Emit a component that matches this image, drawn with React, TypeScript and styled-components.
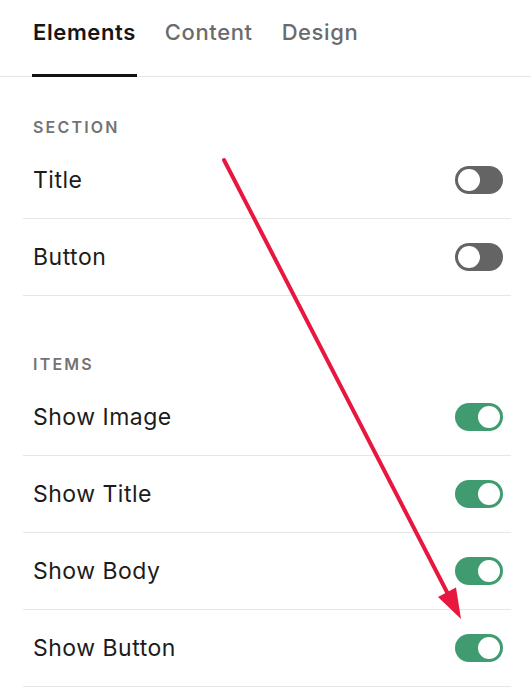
import React from 'react';
import styled, { createGlobalStyle } from 'styled-components';

const GlobalStyle = createGlobalStyle`
  html, body {
    margin: 0;
    padding: 0;
    background: #ffffff;
  }
  body {
    font-family: Inter, "Noto Sans", "Liberation Sans", sans-serif;
    color: #1a1a1a;
    -webkit-font-smoothing: antialiased;
  }
`;

const Panel = styled.div`
  position: relative;
  width: 531px;
  height: 700px;
  overflow: hidden;
  background: #ffffff;
`;

const TabBar = styled.div`
  display: flex;
  align-items: flex-end;
  gap: 27px;
  height: 77px;
  padding-left: 32px;
  border-bottom: 1px solid #e6e6e6;
  box-sizing: border-box;
`;

const Tab = styled.div<{ $active?: boolean }>`
  display: flex;
  align-items: center;
  height: 100%;
  padding: 0 1px 12px;
  box-sizing: border-box;
  font-size: 22px;
  letter-spacing: 0.6px;
  font-weight: ${(p) => (p.$active ? 600 : 500)};
  color: ${(p) => (p.$active ? '#161616' : '#6b6b6b')};
  border-bottom: 3px solid ${(p) => (p.$active ? '#111111' : 'transparent')};
  margin-bottom: -1px;
`;

const Group = styled.div<{ $top: number }>`
  margin: ${(p) => p.$top}px 20px 0 23px;
`;

const GroupLabel = styled.div`
  padding: 0 10px 5px;
  height: 20px;
  line-height: 20px;
  font-size: 16px;
  font-weight: 600;
  letter-spacing: 2.2px;
  color: #737373;
`;

const Row = styled.div`
  display: flex;
  align-items: center;
  justify-content: space-between;
  height: 77px;
  padding: 0 8px 0 10px;
  box-sizing: border-box;
  border-bottom: 1px solid #e6e6e6;
`;

const RowLabel = styled.span`
  font-size: 23px;
  letter-spacing: 0.5px;
  font-weight: 400;
  color: #1c1c1c;
`;

const Switch = styled.div<{ $on: boolean }>`
  position: relative;
  width: 48px;
  height: 28px;
  border-radius: 14px;
  background: ${(p) => (p.$on ? '#409c70' : '#646464')};
  flex: none;

  &::after {
    content: '';
    position: absolute;
    top: 3px;
    left: ${(p) => (p.$on ? '23px' : '3px')};
    width: 22px;
    height: 22px;
    border-radius: 50%;
    background: #ffffff;
  }
`;

const ArrowLayer = styled.svg`
  position: absolute;
  left: 0;
  top: 0;
  pointer-events: none;
`;

const sections = [
  {
    label: 'SECTION',
    top: 40,
    rows: [
      { name: 'Title', on: false },
      { name: 'Button', on: false },
    ],
  },
  {
    label: 'ITEMS',
    top: 58,
    rows: [
      { name: 'Show Image', on: true },
      { name: 'Show Title', on: true },
      { name: 'Show Body', on: true },
      { name: 'Show Button', on: true },
    ],
  },
];

export default function App() {
  return (
    <Panel>
      <GlobalStyle />
      <TabBar>
        <Tab $active>Elements</Tab>
        <Tab>Content</Tab>
        <Tab>Design</Tab>
      </TabBar>
      {sections.map((s) => (
        <Group key={s.label} $top={s.top}>
          <GroupLabel>{s.label}</GroupLabel>
          {s.rows.map((r) => (
            <Row key={r.name}>
              <RowLabel>{r.name}</RowLabel>
              <Switch $on={r.on} />
            </Row>
          ))}
        </Group>
      ))}
      {/* annotation arrow drawn over the panel */}
      <ArrowLayer width="531" height="700" viewBox="0 0 531 700">
        <line x1="224" y1="160" x2="449" y2="596" stroke="#e8173f" strokeWidth="4" strokeLinecap="round" />
        <polygon points="461,619 456,587.5 438,597" fill="#e8173f" />
      </ArrowLayer>
    </Panel>
  );
}
